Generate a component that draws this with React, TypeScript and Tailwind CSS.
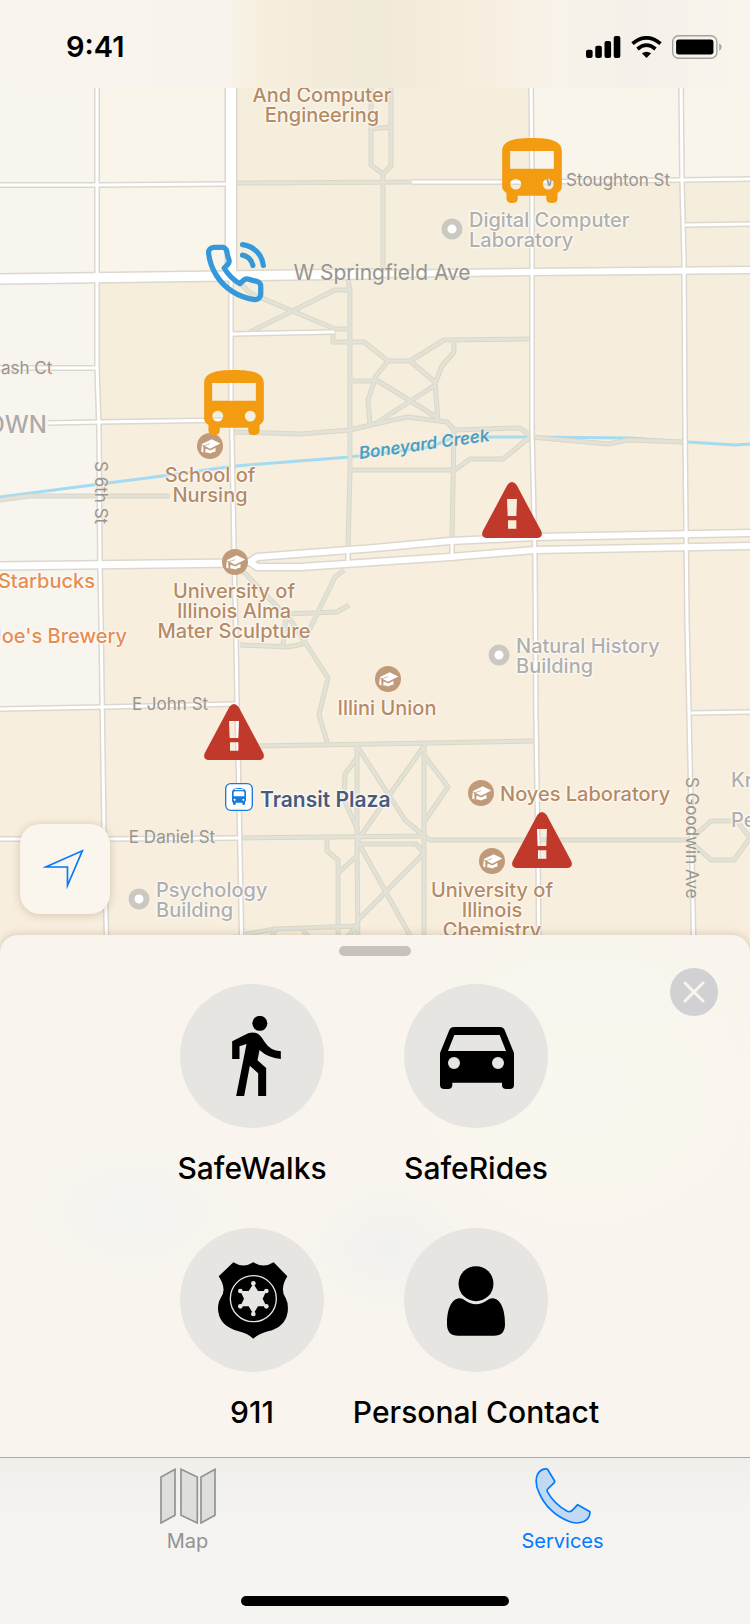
import React from "react";
import { FiPhoneCall } from "react-icons/fi";

const MAP_TOP = 88;

const streets: { d: string; w: number }[] = [
  { d: "M97 80V367L99 430L100 567L101 620L104 830L107 960", w: 3 },
  { d: "M231 270V400L232 440L234 550L236 640L237 700L239 800L242 960", w: 3 },
  { d: "M531 80L532 180V430L535 560L536 720L538 850L539 960", w: 3 },
  { d: "M681 80L682 180L684 260L685 430L687 620L690 760L694 960", w: 3 },
  { d: "M0 185L98 185L226 184", w: 3 },
  { d: "M412 182H530L681 180L750 179", w: 3 },
  { d: "M685 225L750 224", w: 3 },
  { d: "M232 334L334 332", w: 3 },
  { d: "M0 368H97", w: 3 },
  { d: "M48 423L100 422L232 420", w: 3 },
  { d: "M348 548V566", w: 3 },
  { d: "M452 540V560", w: 3 },
  { d: "M0 709L104 707L236 704", w: 3 },
  { d: "M0 839H104L239 838", w: 3 },
  { d: "M691 713L750 712", w: 3 },
  { d: "M231 80V276", w: 10 },
  { d: "M0 279L225 276L375 274", w: 9 },
  { d: "M375 274L530 272L750 270", w: 6 },
  { d: "M0 566L236 563", w: 7 },
  { d: "M244 562H250L257 557L375 548L450 541L535 537L750 533", w: 6 },
  { d: "M244 562H250L257 567H300L375 562L450 557L535 550L750 546", w: 6 },
];

const paths = [
  "M237 183L412 182",
  "M371 80V165L383 174L391 166V80M371 129L391 127M383 174V272",
  "M239 282L250 293L335 329H350M250 332L335 290H350M348 280L350 290V470L348 548",
  "M333 333V342H364L388 361H410L444 340L530 339",
  "M350 381H378L438 418M388 361L376 376L368 400L370 425M410 361L435 382L438 422M435 385L375 424M454 340V352L442 366L435 384",
  "M234 432L300 434L350 430L375 424L407 417L447 422L454 430L520 428L531 436L503 459H470L455 470H350",
  "M454 430L452 540",
  "M531 437L608 444L628 440L684 442",
  "M0 500L30 496H170",
  "M240 568L292 622L305 642L328 678L319 715L328 745",
  "M344 570L335 577L302 645M285 614L337 612L349 605M240 645L288 647L303 644M286 615L283 645",
  "M250 746L375 744L533 741",
  "M357 744V840L358 950M424 744V950",
  "M357 746L405 820L424 836M424 746L357 841M357 758L345 774L344 800L358 830M424 755L448 787L424 822",
  "M241 838L424 836L430 840H690",
  "M327 838V851L338 860V950M338 873L357 856M358 844H416L424 853L358 920M358 842L418 950",
  "M690 840L711 821H737L750 838L734 860H711L692 843",
  "M241 935L275 929L358 926M276 929L267 945M303 930L315 945M357 926L340 945",
];

function Streets() {
  return (
    <svg
      className="absolute inset-0 h-full w-full"
      viewBox="0 88 750 870"
      preserveAspectRatio="xMinYMin slice"
      fill="none"
      strokeLinejoin="round"
      aria-hidden="true"
    >
      <rect x="0" y="80" width="750" height="880" fill="#f8eedd" />
      <rect x="231" y="80" width="519" height="350" fill="#f6eedc" />
      <rect x="97" y="280" width="134" height="140" fill="#f6eddb" />
      <path d="M0 80H97V367L100 567L103 707H0Z" fill="#f8f4ee" />
      <rect x="97" y="80" width="134" height="198" fill="#f9f5ea" />
      <rect x="531" y="80" width="219" height="100" fill="#f9f5ea" />
      <path
        d="M0 497L170 475L235 466L350 457L430 447L455 437H531L630 438L688 442L735 445L750 444"
        stroke="#a4dbf2"
        strokeWidth="3"
      />
      <g stroke="#dad7c5" strokeWidth="5">
        {paths.map((d) => (
          <path key={d} d={d} />
        ))}
      </g>
      <g stroke="#e2e2d9" strokeWidth="3">
        {paths.map((d) => (
          <path key={d} d={d} />
        ))}
      </g>
      <g stroke="#dcd8cf">
        {streets.map((s) => (
          <path key={s.d} d={s.d} strokeWidth={s.w + 3} />
        ))}
      </g>
      <g stroke="#ffffff">
        {streets.map((s) => (
          <path key={s.d} d={s.d} strokeWidth={s.w} />
        ))}
      </g>
    </svg>
  );
}

type Tone = "campus" | "building" | "food" | "street" | "avenue" | "station" | "water" | "district";

const tones: Record<Tone, string> = {
  campus:
    "text-[20px] leading-5 font-medium text-[#b68a63] [text-shadow:0_0_1px_#fff,0_0_2px_#fff,0_0_3px_#fff,0_0_3px_#fff]",
  building:
    "text-[20px] leading-5 font-medium text-[#b0afab] [text-shadow:0_0_1px_#fff,0_0_2px_#fff,0_0_3px_#fff,0_0_3px_#fff]",
  food: "text-[20px] leading-5 font-medium text-[#e58e50] [text-shadow:0_0_1px_#fff,0_0_2px_#fff,0_0_3px_#fff,0_0_3px_#fff]",
  street: "text-[17px] leading-5 text-[#969592] [text-shadow:0_0_2px_#f8eedd,0_0_2px_#f8eedd]",
  avenue: "text-[21px] leading-6 text-[#969592] [text-shadow:0_0_2px_#f8eedd,0_0_2px_#f8eedd]",
  station:
    "text-[21px] leading-6 font-semibold text-[#4a5a7b] [text-shadow:0_0_1px_#fff,0_0_2px_#fff,0_0_3px_#fff,0_0_3px_#fff]",
  water:
    "text-[17px] leading-6 font-semibold italic text-[#4a9fc2] -rotate-8 [text-shadow:0_0_2px_#f8eedd,0_0_3px_#f8eedd]",
  district: "text-[24px] leading-7 font-medium text-[#acaba7] [text-shadow:0_0_2px_#fff,0_0_2px_#fff]",
};

const anchors = {
  start: "text-left",
  center: "-translate-x-1/2 text-center",
  end: "-translate-x-full text-right",
};

type MapLabel = {
  lines: string[];
  x: number;
  y: number;
  tone: Tone;
  anchor?: keyof typeof anchors;
  vertical?: boolean;
};

const labels: MapLabel[] = [
  { lines: ["And Computer", "Engineering"], x: 322, y: 85, tone: "campus", anchor: "center" },
  { lines: ["W Stoughton St"], x: 670, y: 170, tone: "street", anchor: "end" },
  { lines: ["Digital Computer", "Laboratory"], x: 469, y: 210, tone: "building" },
  { lines: ["W Springfield Ave"], x: 382, y: 261, tone: "avenue", anchor: "center" },
  { lines: ["ash Ct"], x: 1, y: 358, tone: "street" },
  { lines: ["OWN"], x: 47, y: 411, tone: "district", anchor: "end" },
  { lines: ["Boneyard Creek"], x: 424, y: 432, tone: "water", anchor: "center" },
  { lines: ["School of", "Nursing"], x: 210, y: 465, tone: "campus", anchor: "center" },
  { lines: ["S 6th St"], x: 91, y: 461, tone: "street", vertical: true },
  { lines: ["Starbucks"], x: 95, y: 571, tone: "food", anchor: "end" },
  { lines: ["Joe's Brewery"], x: 127, y: 626, tone: "food", anchor: "end" },
  { lines: ["University of", "Illinois Alma", "Mater Sculpture"], x: 234, y: 581, tone: "campus", anchor: "center" },
  { lines: ["Natural History", "Building"], x: 516, y: 636, tone: "building" },
  { lines: ["E John St"], x: 170, y: 694, tone: "street", anchor: "center" },
  { lines: ["Illini Union"], x: 387, y: 698, tone: "campus", anchor: "center" },
  { lines: ["Transit Plaza"], x: 260, y: 788, tone: "station" },
  { lines: ["Noyes Laboratory"], x: 500, y: 784, tone: "campus" },
  { lines: ["Kr"], x: 731, y: 770, tone: "building" },
  { lines: ["Pe"], x: 731, y: 810, tone: "building" },
  { lines: ["S Goodwin Ave"], x: 682, y: 777, tone: "street", vertical: true },
  { lines: ["E Daniel St"], x: 172, y: 827, tone: "street", anchor: "center" },
  { lines: ["Psychology", "Building"], x: 156, y: 880, tone: "building" },
  { lines: ["University of", "Illinois", "Chemistry"], x: 492, y: 880, tone: "campus", anchor: "center" },
];

function Cap() {
  return (
    <svg viewBox="0 0 76 76" className="h-[26px] w-[26px]" aria-hidden="true">
      <circle cx="38" cy="38" r="38" fill="#c09a79" />
      <path d="M13 33L43 18L68 31L38 46Z" fill="#fff" />
      <path d="M25 45L39 51L54 43V55Q47 54 39 60Q32 56 24 57Z" fill="#fff" />
      <path d="M38 31L18 38L16 55" fill="none" stroke="#c09a79" strokeWidth="2" />
      <path d="M14 36L18 38L19 57L12 54Z" fill="#fff" />
    </svg>
  );
}

function Dot() {
  return (
    <svg viewBox="0 0 22 22" className="h-[22px] w-[22px]" aria-hidden="true">
      <circle cx="11" cy="11" r="7.5" fill="#fff" stroke="#cac8c1" strokeWidth="6" />
    </svg>
  );
}

function Station() {
  return (
    <svg viewBox="0 0 84 84" className="h-7 w-7" aria-hidden="true">
      <rect x="2" y="2" width="80" height="80" rx="15" fill="#fff" stroke="#1a7bdc" strokeWidth="4" />
      <path
        fillRule="evenodd"
        fill="#1a7bdc"
        d="M21 55V27Q22 15 42 15T63 27V55H60V64Q56 68 52 64V59H32V64Q28 68 24 64V59L21 55ZM26 28V40H58V28L55 25H29ZM29 18V21H55V18ZM29 47a3 3 0 1 0 .1 0ZM55 47a3 3 0 1 0 .1 0Z"
      />
    </svg>
  );
}

function Bus() {
  return (
    <svg viewBox="0 0 180 196" className="h-[65px] w-[60px]" role="img" aria-label="Bus">
      <path
        fill="#f39c12"
        fillRule="evenodd"
        d="M0 40C0 10 30 0 90 0S180 10 180 40V148C180 156 174 161 167 166V182C167 191 162 196 153 196H146C137 196 133 191 133 182V174H47V182C47 191 43 196 34 196H27C18 196 13 191 13 182V166C6 161 0 156 0 148ZM24 39V93H156V39ZM24.500 139a16.500 16.500 0 1 0 33 0a16.500 16.500 0 1 0-33 0ZM122.500 139a16.500 16.500 0 1 0 33 0a16.500 16.500 0 1 0-33 0Z"
      />
    </svg>
  );
}

function Warning() {
  return (
    <svg viewBox="0 0 180 168" className="h-14 w-[60px]" role="img" aria-label="Warning">
      <path
        fill="#c0392b"
        fillRule="evenodd"
        d="M76 9Q90-9 104 9L178 148Q184 164 168 168H12Q-4 164 2 148ZM75 51L77 102H103L105 51ZM78 115V140H103V115Z"
      />
    </svg>
  );
}

const markers: { x: number; y: number; node: React.ReactNode }[] = [
  { x: 197, y: 433, node: <Cap /> },
  { x: 222, y: 549, node: <Cap /> },
  { x: 375, y: 666, node: <Cap /> },
  { x: 468, y: 780, node: <Cap /> },
  { x: 479, y: 848, node: <Cap /> },
  { x: 441, y: 218, node: <Dot /> },
  { x: 488, y: 644, node: <Dot /> },
  { x: 128, y: 888, node: <Dot /> },
  { x: 225, y: 783, node: <Station /> },
];

const alerts: { x: number; y: number; node: React.ReactNode }[] = [
  { x: 502, y: 138, node: <Bus /> },
  { x: 204, y: 370, node: <Bus /> },
  { x: 203, y: 242, node: <FiPhoneCall size={63} color="#3498db" aria-label="Emergency phone" /> },
  { x: 482, y: 482, node: <Warning /> },
  { x: 204, y: 704, node: <Warning /> },
  { x: 512, y: 812, node: <Warning /> },
];

function StatusBar() {
  return (
    <header className="flex h-22 shrink-0 items-center justify-between bg-[linear-gradient(90deg,#f8f4ee_0%,#f8f4ed_29%,#f7eedd_35%,#f4ecdb_42%,#f0ead9_50%,#f4ecdb_56%,#f7eedf_63%,#f8f3e9_75%,#f5f1ea_84%,#f9f5ed_100%)] pt-[6px] pr-7 pl-[66px]">
      <time className="text-[29px] leading-9 font-semibold text-black">9:41</time>
      <div className="flex items-center gap-[10px]">
        <svg viewBox="0 0 106 66" className="h-[22px] w-[35px]" aria-label="Signal">
          <rect x="0" y="41" width="20" height="25" rx="6" />
          <rect x="28" y="29" width="20" height="37" rx="6" />
          <rect x="56" y="15" width="20" height="51" rx="6" />
          <rect x="84" y="0" width="20" height="66" rx="6" />
        </svg>
        <svg viewBox="0 0 92 66" className="h-[22px] w-[31px]" fill="none" stroke="#000" strokeWidth="11" aria-label="Wi-Fi">
          <path d="M4 23Q46 -12 88 23" />
          <path d="M19 39Q46 16 73 39" />
          <path d="M32 52Q46 42 60 52L46 66Z" fill="#000" stroke="none" />
        </svg>
        <svg viewBox="0 0 146 70" className="h-6 w-[50px]" aria-label="Battery">
          <rect x="2" y="2" width="129" height="66" rx="17" fill="none" stroke="#a5a19b" strokeWidth="4" />
          <rect x="12" y="13" width="109" height="44" rx="8" />
          <path d="M138 24Q145 28 145 35T138 47Z" fill="#a5a19b" />
        </svg>
      </div>
    </header>
  );
}

function CampusMap() {
  return (
    <section aria-label="Campus map" className="relative min-h-[480px] flex-1 overflow-hidden bg-[#f8eedd]">
      <Streets />
      {labels.map((l) => (
        <div
          key={l.lines.join(" ") + l.y}
          className={`absolute whitespace-nowrap ${tones[l.tone]} ${anchors[l.anchor ?? "start"]} ${
            l.vertical ? "[writing-mode:vertical-rl]" : ""
          }`}
          style={{ left: l.x, top: l.y - MAP_TOP }}
        >
          {l.lines.map((line) => (
            <div key={line}>{line}</div>
          ))}
        </div>
      ))}
      {[...markers, ...alerts].map((m) => (
        <div key={`${m.x}-${m.y}`} className="absolute" style={{ left: m.x, top: m.y - MAP_TOP }}>
          {m.node}
        </div>
      ))}
      <button
        type="button"
        aria-label="Centre on my location"
        className="absolute bottom-[41px] left-5 flex h-[90px] w-[90px] items-center justify-center rounded-[20px] bg-[#faf5ed] pr-1 shadow-[0_1px_8px_rgba(90,70,30,0.25)]"
      >
        <svg viewBox="0 0 124 120" className="h-10 w-[41px]" fill="none" stroke="#007aff" strokeWidth="5" aria-hidden="true">
          <path d="M8 54L119 5L74 110V54Z" strokeMiterlimit="10" />
        </svg>
      </button>
    </section>
  );
}

const services: { name: string; icon: React.ReactNode }[] = [
  {
    name: "SafeWalks",
    icon: (
      <svg viewBox="0 0 146 240" className="ml-2 h-20 w-[49px]" aria-hidden="true">
        <circle cx="83" cy="22" r="22.500" />
        <path d="M0 76L48 52Q60 47 72 51Q84 55 96 76Q114 105 146 106V129Q108 126 82 102L76 133L102 156V240H78V172L53 149L36 240H12L43 84L22 91V129H0Z" />
      </svg>
    ),
  },
  {
    name: "SafeRides",
    icon: (
      <svg viewBox="0 0 222 186" className="mt-1 ml-[2px] h-[62px] w-[74px]" aria-hidden="true">
        <path
          fillRule="evenodd"
          d="M28 9Q32 0 42 0H180Q190 0 194 9L222 78V173Q222 186 209 186H199Q186 186 186 173V167H37V173Q37 186 24 186H13Q0 186 0 173V78ZM43 24L24 72H198L179 24ZM24 108a18 18 0 1 0 36 0a18 18 0 1 0-36 0ZM156 108a18 18 0 1 0 36 0a18 18 0 1 0-36 0Z"
        />
      </svg>
    ),
  },
  {
    name: "911",
    icon: (
      <svg viewBox="0 0 210 231" className="ml-[2px] h-[77px] w-[70px]" aria-hidden="true">
        <path d="M46 1Q76 20 106 1Q137 20 167 1L208 43Q184 82 203 108Q212 125 209 150Q202 196 150 208Q124 214 106 230Q88 214 62 208Q8 194 1 150Q-3 125 8 108Q28 82 2 43Z" />
        <circle cx="106" cy="110" r="69" fill="none" stroke="#e6e5e1" strokeWidth="4" />
        <g fill="#e6e5e1">
          <path d="M106 65L120 87L145 87L134 110L145 133L120 133L106 156L92 133L67 133L78 110L67 87L92 87Z" />
          <circle cx="106" cy="64" r="7" />
          <circle cx="106" cy="156" r="7" />
          <circle cx="67" cy="87" r="7" />
          <circle cx="145" cy="87" r="7" />
          <circle cx="67" cy="133" r="7" />
          <circle cx="145" cy="133" r="7" />
        </g>
      </svg>
    ),
  },
  {
    name: "Personal Contact",
    icon: (
      <svg viewBox="0 0 176 211" className="mt-[2px] h-[70px] w-[58px]" aria-hidden="true">
        <circle cx="88" cy="53" r="53" />
        <path d="M36 97Q46 96 54 103Q88 127 122 103Q130 96 140 97C168 102 176 140 176 176Q176 211 142 211H34Q0 211 0 176C0 140 8 102 36 97Z" />
      </svg>
    ),
  },
];

function ServicesSheet() {
  return (
    <section
      aria-label="Services"
      className="relative -mt-5 flex justify-center rounded-t-[18px] bg-[#f9f5ee] bg-[radial-gradient(ellipse_110px_70px_at_18%_53%,#f3f3f1,transparent),radial-gradient(ellipse_90px_70px_at_52%_60%,#f1f1ef,transparent),radial-gradient(ellipse_240px_200px_at_78%_30%,#f9f7ef,transparent)] pt-[49px] pr-[22px] pb-[27px] shadow-[0_0_8px_rgba(90,70,30,0.25)]"
    >
      <div className="absolute top-[11px] left-1/2 h-[10px] w-[72px] -translate-x-1/2 rounded-full bg-[#c5c3bc]" />
      <button
        type="button"
        aria-label="Close"
        className="absolute top-[33px] right-8 flex h-12 w-12 items-center justify-center rounded-full bg-[#d1d0d2]"
      >
        <svg viewBox="0 0 22 22" className="h-[22px] w-[22px]" stroke="#faf6ef" strokeWidth="3" strokeLinecap="round" aria-hidden="true">
          <path d="M2 2L20 20M20 2L2 20" />
        </svg>
      </button>
      <ul className="grid grid-cols-[224px_224px] gap-y-[42px]">
        {services.map((s) => (
          <li key={s.name} className="flex justify-center">
            <button type="button" className="flex w-36 flex-col items-center gap-[22px]">
              <span className="flex h-36 w-36 items-center justify-center rounded-full bg-[#e6e5e1]">{s.icon}</span>
              <span className="text-[30px] leading-9 font-medium whitespace-nowrap text-black">{s.name}</span>
            </button>
          </li>
        ))}
      </ul>
    </section>
  );
}

function TabBar() {
  return (
    <nav className="relative flex flex-col items-center border-t border-[#acaba8] bg-[linear-gradient(180deg,#f0efec_0%,#f5f4f1_40%,#f5f4f0_100%)] pt-[10px] pb-[18px]">
      <div className="grid w-full grid-cols-2">
        <button type="button" className="flex flex-col items-center gap-1 text-[#929292]">
          <svg viewBox="0 0 168 168" className="h-14 w-14" fill="#dededc" stroke="#929292" strokeWidth="5" aria-hidden="true">
            <path d="M3 27L45 4V142L3 165ZM63 4L112 27V165L63 142ZM123 27L165 4V142L123 165Z" />
          </svg>
          <span className="text-[20px] leading-[26px]">Map</span>
        </button>
        <button type="button" aria-current="page" className="flex flex-col items-center gap-1 text-[#007aff]">
          <svg viewBox="0 0 168 168" className="h-14 w-14" fill="#c2d9f3" stroke="#007aff" strokeWidth="5" strokeLinejoin="round" aria-hidden="true">
            <path d="M37 3Q19 1 8 18Q-3 42 12 74Q38 134 101 160Q125 170 148 160Q165 150 165 131L128 110L114 125Q106 134 97 130Q57 108 37 71Q34 66 40 61L58 44L59 39Z" />
          </svg>
          <span className="text-[20px] leading-[26px]">Services</span>
        </button>
      </div>
      <div className="mt-[42px] h-[10px] w-[268px] rounded-full bg-black" />
    </nav>
  );
}

export default function App() {
  return (
    <main className="flex min-h-screen flex-col bg-[#f9f5ee] font-['Inter','Liberation_Sans',sans-serif]">
      <StatusBar />
      <CampusMap />
      <ServicesSheet />
      <TabBar />
    </main>
  );
}
